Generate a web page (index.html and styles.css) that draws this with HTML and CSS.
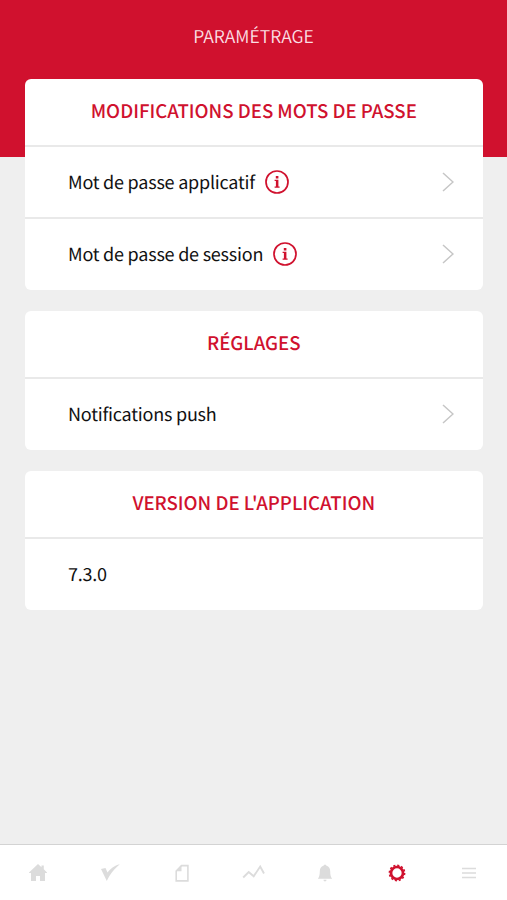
FILE: index.html
```html
<!DOCTYPE html>
<html lang="fr">
<head>
    <meta charset="UTF-8">
    <meta name="viewport" content="width=device-width, initial-scale=1.0">
    <title>Paramétrage</title>
    <link rel="stylesheet" href="styles.css">
</head>
<body>

    <header class="header">
        <h1>PARAMÉTRAGE</h1>
    </header>

    <main class="content">
        <section class="card">
            <h2>MODIFICATIONS DES MOTS DE PASSE</h2>
            <a class="row">
                <span class="label">Mot de passe applicatif</span>
                <svg class="info" viewBox="0 0 24 24">
                    <circle cx="12" cy="12" r="11"/>
                    <path d="M10.8 6h2.6v2.4h-2.6zM9.6 9.7h3.8v6.9h1.2v1.2H9.6v-1.2h1.3v-5.7H9.6z"/>
                </svg>
                <svg class="chevron" viewBox="0 0 12 20"><path d="M1 1l10 9-10 9"/></svg>
            </a>
            <a class="row">
                <span class="label">Mot de passe de session</span>
                <svg class="info" viewBox="0 0 24 24">
                    <circle cx="12" cy="12" r="11"/>
                    <path d="M10.8 6h2.6v2.4h-2.6zM9.6 9.7h3.8v6.9h1.2v1.2H9.6v-1.2h1.3v-5.7H9.6z"/>
                </svg>
                <svg class="chevron" viewBox="0 0 12 20"><path d="M1 1l10 9-10 9"/></svg>
            </a>
        </section>

        <section class="card">
            <h2>RÉGLAGES</h2>
            <a class="row">
                <span class="label">Notifications push</span>
                <svg class="chevron" viewBox="0 0 12 20"><path d="M1 1l10 9-10 9"/></svg>
            </a>
        </section>

        <section class="card">
            <h2>VERSION DE L'APPLICATION</h2>
            <div class="row">
                <span class="label">7.3.0</span>
            </div>
        </section>
    </main>

    <nav class="tabs">
        <a class="tab">
            <svg viewBox="0 0 24 24"><path d="M12 3l3.500 3.200V4.500h2.300v3.800L21 11.400V12h-2v8h-5v-5h-4v5H5v-8H3v-.6z"/></svg>
        </a>
        <a class="tab">
            <svg viewBox="0 0 24 24"><path d="M3 8l4.500-.9 2 4.500C12 8 16.500 4.500 21.800 3.200 16.500 7.500 12.500 12.500 8.800 20z"/></svg>
        </a>
        <a class="tab">
            <svg viewBox="0 0 24 24"><path d="M11.500 4.600h6.400v15.300H6.200V10z" fill="none" stroke="currentColor" stroke-width="1.600"/><path d="M11.500 4v6.300H6z"/></svg>
        </a>
        <a class="tab">
            <svg viewBox="0 0 24 24"><path d="M1.200 16.500l5.500-5.500 5 4.300 6.500-9.800 3.800 7" fill="none" stroke="currentColor" stroke-width="1.900"/></svg>
        </a>
        <a class="tab">
            <svg viewBox="0 0 24 24"><path d="M12 3.800c1 0 1.300.5 1.500 1 2.500.7 3.700 2.700 3.700 5.400 0 4 .6 5.600 2 7.600H4.800c1.400-2 2-3.600 2-7.600 0-2.700 1.200-4.700 3.700-5.400.2-.5.500-1 1.500-1zM10.500 18.800h3c0 1-.6 1.600-1.500 1.600s-1.500-.6-1.500-1.600z"/></svg>
        </a>
        <a class="tab active">
            <svg viewBox="0 0 24 24">
                <circle cx="12" cy="12" r="6" fill="none" stroke="currentColor" stroke-width="2.700"/>
                <circle cx="12" cy="12" r="7.600" fill="none" stroke="currentColor" stroke-width="1.600" stroke-dasharray="2.100 1.880"/>
            </svg>
        </a>
        <a class="tab">
            <svg viewBox="0 0 24 24"><path d="M5 7.500h14M5 12h14M5 16.500h14" fill="none" stroke="currentColor" stroke-width="1.700"/></svg>
        </a>
    </nav>

</body>
</html>
```
FILE: styles.css
```css
* {
    box-sizing: border-box;
}

body {
    display: flex;
    flex-direction: column;
    height: 100vh;
    margin: 0;
    background-color: #efefef;
    color: #111;
    font-family: "Noto Sans CJK JP", "Noto Sans", sans-serif;
    text-rendering: geometricPrecision;
}

.header {
    height: 157px;
    background-color: #d0112e;
}

h1 {
    margin: 0;
    padding-top: 24px;
    color: #fbdfe3;
    font-size: 17.6px;
    font-weight: 350;
    line-height: 26px;
    text-align: center;
}

.content {
    display: flex;
    flex: 1;
    flex-direction: column;
    gap: 21px;
    margin-top: -78px;
    padding: 0 24.5px 0 25px;
}

.card {
    border-radius: 6px;
    background-color: #fff;
}

h2 {
    height: 66px;
    margin: 0;
    color: #d0112e;
    font-size: 18.6px;
    font-weight: 500;
    line-height: 64px;
    text-align: center;
}

.row {
    display: flex;
    align-items: center;
    height: 73px;
    padding: 0 29px 1px 43px;
    border-top: 2px solid #e9e9e9;
}

.row:nth-child(2):not(:last-child) {
    height: 72px;
}

.label {
    font-size: 18px;
    letter-spacing: -0.22px;
}

.info {
    width: 24px;
    height: 24px;
    margin-left: 10px;
    fill: #d0112e;
}

.info circle {
    fill: none;
    stroke: #d0112e;
    stroke-width: 1.7;
}

.chevron {
    width: 12px;
    height: 20px;
    margin-left: auto;
    fill: none;
    stroke: #c6c6c6;
    stroke-width: 1.5;
}

.tabs {
    display: flex;
    height: 56px;
    padding: 0 2px;
    border-top: 1px solid #d3d3d3;
    background-color: #fff;
}

.tab {
    display: flex;
    flex: 1;
    align-items: center;
    justify-content: center;
    color: #dcdcdc;
}

.tab svg {
    width: 24px;
    height: 24px;
    fill: currentColor;
}

.tab.active {
    color: #d0112e;
}
```
